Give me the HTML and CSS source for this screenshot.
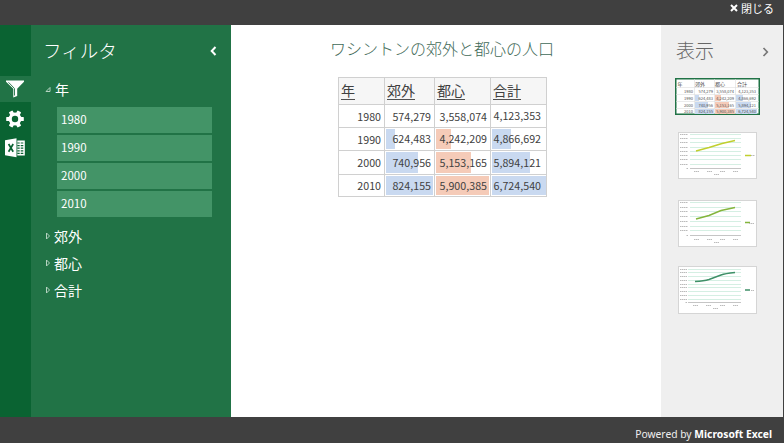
FILE: index.html
```html
<!DOCTYPE html>
<html lang="ja">
<head>
<meta charset="utf-8">
<title>ワシントンの郊外と都心の人口</title>
<link rel="stylesheet" href="styles.css">
</head>
<body>
<div class="app">
  <header class="topbar">
    <svg class="close-icon" viewBox="0 0 8 8"><path d="M1 1l6 6M7 1L1 7"/></svg>
    <span>閉じる</span>
  </header>
  <div class="body">
    <nav class="rail">
      <div class="rail-item active">
        <svg width="20" height="20" viewBox="0 0 20 20"><path fill="#fff" d="M1 1.500h18v1.200l-6.800 7.100v7.200l-3.900 1.500V9.800L1 2.700z"/><path d="M3.500 3.300l6 6.200v7" fill="none" stroke="#217346" stroke-width=".9"/></svg>
      </div>
      <div class="rail-item">
        <svg width="20" height="20" viewBox="-10 -10 20 20"><g fill="#fff"><circle r="6.500"/><g id="tooth"><rect x="-8.800" y="-2.100" width="17.600" height="4.200" rx=".7"/></g><use href="#tooth" transform="rotate(60)"/><use href="#tooth" transform="rotate(120)"/></g><circle r="3.200" fill="#0a6332"/></svg>
      </div>
      <div class="rail-item">
        <svg width="20" height="20" viewBox="0 0 20 20"><path fill="#fff" d="M0 2.300L11.500.3v19L0 17.300zM12.300 2.500h7.500v15h-7.500z"/><path d="M3.600 6l4.600 7.800M8.200 6l-4.600 7.800" stroke="#0a6332" stroke-width="1.700"/><path d="M12.300 5h2.400M15.700 5h2.600M12.300 7.600h2.400M15.700 7.600h2.600M12.300 10.200h2.400M15.700 10.200h2.600M12.300 12.800h2.400M15.700 12.800h2.600M12.300 15.300h2.400M15.700 15.300h2.600" stroke="#0a6332" stroke-width="1.200"/></svg>
      </div>
    </nav>
    <aside class="filters">
      <div class="panel-head">
        <h2>フィルタ</h2>
        <svg class="chevron" width="7" height="10" viewBox="0 0 7 10"><path d="M5.500 1L1.700 5l3.800 4"/></svg>
      </div>
      <div class="group open"><svg width="6" height="7" viewBox="0 0 6 7"><path d="M5 1.500V5.500H1z"/></svg>年</div>
      <ul class="options">
        <li>1980</li>
        <li>1990</li>
        <li>2000</li>
        <li>2010</li>
      </ul>
      <div class="group"><svg width="6" height="8" viewBox="0 0 6 8"><path d="M1.500 1l3 3-3 3z"/></svg>郊外</div>
      <div class="group"><svg width="6" height="8" viewBox="0 0 6 8"><path d="M1.500 1l3 3-3 3z"/></svg>都心</div>
      <div class="group"><svg width="6" height="8" viewBox="0 0 6 8"><path d="M1.500 1l3 3-3 3z"/></svg>合計</div>
    </aside>
    <main class="main">
      <h1>ワシントンの郊外と都心の人口</h1>
      <div class="grid">
        <div class="cell head"><span>年</span></div><div class="cell head"><span>郊外</span></div><div class="cell head"><span>都心</span></div><div class="cell head"><span>合計</span></div>
        <div class="cell low">1980</div><div class="cell low">574,279</div><div class="cell low">3,558,074</div><div class="cell total">4,123,353</div>
        <div class="cell low">1990</div><div class="cell"><i class="bar" style="width:9px"></i><b>624,483</b></div><div class="cell"><i class="bar warm" style="width:15px"></i><b>4,242,209</b></div><div class="cell total"><i class="bar" style="width:19px"></i><b>4,866,692</b></div>
        <div class="cell">2000</div><div class="cell"><i class="bar" style="width:32px"></i><b>740,956</b></div><div class="cell"><i class="bar warm" style="width:35px"></i><b>5,153,165</b></div><div class="cell total"><i class="bar" style="width:38px"></i><b>5,894,121</b></div>
        <div class="cell">2010</div><div class="cell"><i class="bar" style="width:47px"></i><b>824,155</b></div><div class="cell"><i class="bar warm" style="width:53px"></i><b>5,900,385</b></div><div class="cell total"><i class="bar" style="width:54px"></i><b>6,724,540</b></div>
      </div>
    </main>
    <aside class="views">
      <div class="panel-head">
        <h2>表示</h2>
        <svg class="chevron" width="7" height="10" viewBox="0 0 7 10"><path d="M1.500 1l3.800 4-3.800 4"/></svg>
      </div>
      <div class="thumb selected">
        <svg width="83" height="35" viewBox="0 0 83 35">
          <path fill="#c9d9f0" d="M19 16h4v6h-4zM19 23h13v6H19zM19 30h19v5H19zM60 16h7v6h-7zM60 23h15v6H60zM60 30h21v5H60z"/>
          <path fill="#f5cbb8" d="M39 16h6v6h-6zM39 23h14v6H39zM39 30h20v5H39z"/>
          <path stroke="#ddd" stroke-width=".6" d="M0 8.500h83M0 15.500h83M0 22.500h83M0 29.500h83M18.500 0v35M38.500 0v35M59.500 0v35"/>
          <g class="mini-head"><text x="1.500" y="7">年</text><text x="19" y="7">郊外</text><text x="39" y="7">都心</text><text x="61" y="7">合計</text></g>
          <g class="mini"><text x="17" y="14">1980</text><text x="37" y="14">574,279</text><text x="58" y="14">3,558,074</text><text x="80" y="13.500">4,123,353</text>
          <text x="17" y="21">1990</text><text x="37" y="20.500">624,483</text><text x="58" y="20.500">4,242,209</text><text x="80" y="20.500">4,866,692</text>
          <text x="17" y="27.500">2000</text><text x="37" y="27.500">740,956</text><text x="58" y="27.500">5,153,165</text><text x="80" y="27.500">5,894,121</text>
          <text x="17" y="33.500">2010</text><text x="37" y="33.500">824,155</text><text x="58" y="33.500">5,900,385</text><text x="80" y="33.500">6,724,540</text></g>
        </svg>
      </div>
      <div class="thumb chart">
        <svg width="77" height="45" viewBox="0 0 77 45">
          <path class="lines" d="M11 1.500h51M11 5.500h51M11 9.500h51M11 14.500h51M11 18.500h51M11 22.500h51M11 26.500h51M11 31.500h51"/>
          <path class="axis" d="M11 35.500h51"/>
          <path class="ticks" d="M1 1.500h8M1 5.500h8M1 9.500h8M1 14.500h8M1 18.500h8M1 22.500h8M1 26.500h8M1 31.500h8M7.500 35.500h1.500M15 38.500h5M28 38.500h5M41 38.500h5M54 38.500h5M35 41.500h5"/>
          <path class="series lime" d="M17 18L30 14.500 43 10.500 56 7.500M66 22.500h6"/>
          <path class="ticks" d="M72 22.500h4"/>
        </svg>
      </div>
      <div class="thumb chart second">
        <svg width="77" height="45" viewBox="0 0 77 45">
          <path class="lines" d="M11 1.500h51M11 6.500h51M11 10.500h51M11 15.500h51M11 20.500h51M11 25.500h51M11 29.500h51"/>
          <path class="axis" d="M11 34.500h51"/>
          <path class="ticks" d="M1 1.500h8M1 6.500h8M1 10.500h8M1 15.500h8M1 20.500h8M1 25.500h8M1 29.500h8M7.500 34.500h1.500M15 38.500h5M28 38.500h5M41 38.500h5M54 38.500h5M35 41.500h5"/>
          <path class="series green" d="M17 18L30 14.500 42 9.500 56 6.500M66 21.500h5"/>
          <path class="ticks" d="M70 22.500h5"/>
        </svg>
      </div>
      <div class="thumb chart third">
        <svg width="77" height="46" viewBox="0 0 77 46">
          <path class="lines" d="M9 2.500h53M9 5.500h53M9 9.500h53M9 13.500h53M9 17.500h53M9 20.500h53M9 24.500h53M9 28.500h53M9 32.500h53"/>
          <path class="axis" d="M9 35.500h53"/>
          <path class="ticks" d="M1 2.500h7M1 5.500h7M1 9.500h7M1 13.500h7M1 17.500h7M1 20.500h7M1 24.500h7M1 28.500h7M1 32.500h7M6.500 35.500h1.500M14 38.500h5M27 38.500h5M41 38.500h5M54 38.500h5M34 41.500h5"/>
          <path class="series teal" d="M16 14.500Q25 14 30 12.500L42 8Q46 6.500 56 5.500M66 23h5"/>
          <path class="ticks" d="M72 23.500h3"/>
        </svg>
      </div>
    </aside>
  </div>
  <footer class="footer"><span>Powered by <strong>Microsoft Excel</strong></span></footer>
</div>
</body>
</html>
```
FILE: styles.css
```css
* { box-sizing: border-box; margin: 0; padding: 0; }
body {
  font-family: "Noto Sans CJK JP", sans-serif;
  background: #404040;
}
svg { display: block; flex: none; }
.app { width: 784px; height: 443px; display: flex; flex-direction: column; overflow: hidden; }
.topbar {
  height: 25px; flex: none; display: flex; justify-content: flex-end; align-items: center;
  gap: 3px; padding: 0 10px 10px 0; color: #fff; font-size: 11px; line-height: 16px;
}
.close-icon { width: 8px; height: 8px; stroke: #fff; stroke-width: 2; }
.body { height: 392px; flex: none; display: flex; padding-right: 1px; }
.rail { width: 31px; background: #0a6332; padding-top: 51px; }
.rail-item { height: 29px; display: flex; align-items: center; padding-left: 5px; }
.rail-item.active { background: #217346; height: 26px; margin-bottom: 2px; }
.filters { width: 200px; background: #217346; color: #fff; }
.panel-head { display: flex; justify-content: space-between; align-items: center; height: 51px; }
.panel-head h2 { font-weight: 300; font-size: 18.500px; line-height: 26px; padding-bottom: 2px; }
.chevron { fill: none; stroke: #fff; stroke-width: 2; }
.filters .panel-head { padding: 0 14px 0 12px; }
.group {
  height: 27px; display: flex; align-items: center; gap: 3px; padding-left: 14px;
  font-size: 14px; line-height: 20px;
}
.group svg { fill: none; stroke: #b5d3c1; stroke-width: 1; }
.group.open { height: 26px; gap: 4px; }
.options { list-style: none; margin: 5px 19px 5px 26px; display: grid; grid-auto-rows: 26px; row-gap: 2px; }
.options li { background: #439467; padding-left: 4px; font-size: 11.500px; line-height: 25px; }
.main { width: 430px; background: #fff; padding-top: 11px; }
.main h1 {
  font-size: 16px; font-weight: 300; line-height: 24px; color: #3f6a58; padding-left: 99px;
}
.grid {
  width: 209px; margin: 17px 0 0 107px; display: grid;
  grid-template-columns: 46px 50px 56px 56px; grid-template-rows: 27px 23px 23px 24px 22px;
  border: solid #d0d0d0; border-width: 1px 0 0 1px;
}
.cell {
  position: relative; border: solid #d0d0d0; border-width: 0 1px 1px 0; color: #404040;
  font-size: 10.700px; line-height: 16px; display: flex; align-items: center;
  justify-content: flex-end; padding-right: 3px;
}
.cell.low { padding-top: 2px; }
.cell.total { padding-right: 5px; }
.cell.head { background: #f6f6f6; justify-content: flex-start; padding-left: 2px; font-size: 14px; }
.cell.head span { border-bottom: 1px solid #505050; line-height: 17px; }
.cell b { position: relative; font-weight: 400; }
.bar { position: absolute; left: 1px; top: 1px; bottom: 1px; background: #c9d9f0; }
.bar.warm { background: #f5cbb8; }
.views { width: 122px; background: #efefef; }
.views .panel-head { padding: 0 14px 0 15px; color: #666; height: 53px; }
.views .panel-head h2 { font-size: 19px; padding-bottom: 4px; }
.views .chevron { stroke: #777; stroke-width: 1.700; }
.thumb { background: #fff; }
.thumb.selected { width: 85px; height: 37px; margin-left: 14px; border: 1px solid #217346; box-shadow: inset 0 0 0 .5px #217346; }
.mini-head text { font-size: 5px; fill: #444; }
.mini text { font-size: 4px; fill: #555; text-anchor: end; }
.thumb.chart { width: 79px; height: 47px; margin: 17px 0 0 17px; border: 1px solid #d5d5d5; }
.thumb.chart.second { margin-top: 21px; }
.thumb.chart.third { margin-top: 19px; height: 48px; }
.lines { stroke: #d5efe3; stroke-width: 1; }
.axis { stroke: #c5c5c5; stroke-width: 1; }
.ticks { stroke: #bbb; stroke-width: 1; stroke-dasharray: 1.500 .5; }
.series { fill: none; stroke-width: 1.400; }
.lime { stroke: #c0cf2e; }
.green { stroke: #84b53c; }
.teal { stroke: #3f9068; }
.footer {
  height: 26px; flex: none; color: #eee; text-align: right; padding: 10px 12px 0 0;
  font-size: 10.300px; line-height: 14px; font-family: "Noto Sans", sans-serif;
}
.footer strong { color: #fff; }
```
